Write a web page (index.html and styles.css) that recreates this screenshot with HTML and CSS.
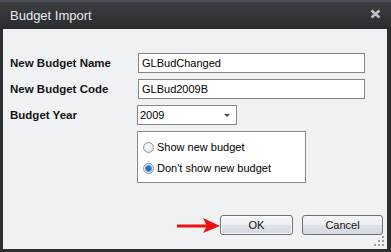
FILE: index.html
```html
<!DOCTYPE html>
<html lang="en">
<head>
    <meta charset="UTF-8">
    <title>Budget Import</title>
    <link rel="stylesheet" href="styles.css">
</head>
<body>
    <div class="window">
        <div class="titlebar">
            <span class="title">Budget Import</span>
            <svg class="close" width="11" height="10" viewBox="0 0 11 10">
                <path d="M1.5 1.5 L9.5 8.5 M9.5 1.5 L1.5 8.5" stroke="#b9c3cf" stroke-width="2.6" fill="none"/>
            </svg>
        </div>

        <div class="content">
            <div class="form">
                <label class="label">New Budget Name</label>
                <div class="field name-field">GLBudChanged</div>

                <label class="label">New Budget Code</label>
                <div class="field">GLBud2009B</div>

                <label class="label">Budget Year</label>
                <div class="select">
                    <span>2009</span>
                    <span class="caret"></span>
                </div>

                <div></div>
                <div class="options">
                    <div class="option">
                        <span class="radio"></span>
                        <span>Show new budget</span>
                    </div>
                    <div class="option">
                        <span class="radio checked"></span>
                        <span>Don't show new budget</span>
                    </div>
                </div>
            </div>

            <div class="buttons">
                <button class="btn ok">OK</button>
                <button class="btn cancel">Cancel</button>
            </div>

            <!-- annotation arrow pointing at OK -->
            <svg class="arrow" width="44" height="16" viewBox="0 0 44 16">
                <rect x="0" y="6.5" width="30" height="3" fill="#ee1010"/>
                <path d="M26 0 L43 8 L26 15 L30 8 Z" fill="#ee1010"/>
            </svg>

            <svg class="grip" width="11" height="11" viewBox="0 0 11 11">
                <rect x="8" y="0" width="2" height="2" fill="#9aa0a8"/>
                <rect x="4" y="4" width="2" height="2" fill="#9aa0a8"/>
                <rect x="8" y="4" width="2" height="2" fill="#9aa0a8"/>
                <rect x="0" y="8" width="2" height="2" fill="#9aa0a8"/>
                <rect x="4" y="8" width="2" height="2" fill="#9aa0a8"/>
                <rect x="8" y="8" width="2" height="2" fill="#9aa0a8"/>
            </svg>
        </div>
    </div>
</body>
</html>
```

FILE: styles.css
```css
body {
    margin: 0;
    font-family: "Liberation Sans", Arial, sans-serif;
    background: #2c2e32;
}
.window {
    width: 391px;
    height: 252px;
    box-sizing: border-box;
    display: flex;
    flex-direction: column;
    background: #2c2e32;
    padding: 0 4px 3px 3px;
}
.titlebar {
    height: 29px;
    margin: 0 -4px 0 -3px;
    padding: 0 10px 0 10px;
    display: flex;
    align-items: center;
    justify-content: space-between;
    border-top: 2px solid #4b505b;
    box-sizing: border-box;
    background: linear-gradient(#3c3e42, #2a2b2e);
}
.title {
    color: #e6ebf2;
    font-size: 13px;
    margin-top: -1px;
}
.close {
    margin-right: 0;
    margin-top: -3px;
}
.content {
    position: relative;
    flex: 1;
    display: flex;
    flex-direction: column;
    background: #f0f1f3;
    padding: 24px 4px 14px 7px;
}
.form {
    display: grid;
    grid-template-columns: 128px 227px;
    grid-template-rows: 20px 20px 20px auto;
    row-gap: 6px;
    align-items: center;
}
.label {
    font-weight: bold;
    font-size: 11.5px;
    color: #141414;
}
.field {
    height: 20px;
    box-sizing: border-box;
    border: 1px solid #858585;
    background: #fff;
    font-size: 11px;
    padding: 3px 0 0 3px;
    color: #000;
}
.name-field {
    margin-bottom: 1px;
}
.select {
    width: 100px;
    height: 20px;
    box-sizing: border-box;
    margin-left: -1px;
    border: 1px solid #858585;
    background: #fff;
    font-size: 11px;
    padding: 0 6px 0 2px;
    display: flex;
    align-items: center;
    justify-content: space-between;
}
.caret {
    width: 0;
    height: 0;
    border-left: 3px solid transparent;
    border-right: 3px solid transparent;
    border-top: 3px solid #444;
    margin-top: 1px;
}
.options {
    width: 169px;
    height: 52px;
    box-sizing: border-box;
    margin-left: -1px;
    border: 1px solid #8a8a8a;
    background: #fff;
    display: flex;
    flex-direction: column;
    justify-content: center;
    gap: 9px;
    padding: 1px 0 0 5px;
    font-size: 11px;
}
.option {
    display: flex;
    align-items: center;
    gap: 3px;
}
.radio {
    width: 11px;
    height: 11px;
    box-sizing: border-box;
    border-radius: 50%;
    border: 1px solid #8e959c;
    background: radial-gradient(circle at 40% 35%, #fbfbfb, #d9dde1);
}
.radio.checked {
    background: radial-gradient(circle, #2a6fb0 0 2px, #5f9fd6 3px, #dbe7f1 4px, #eef2f5 6px);
}
.buttons {
    margin-top: auto;
    display: flex;
    justify-content: flex-end;
    gap: 9px;
}
.btn {
    height: 20px;
    font-family: "Liberation Sans", Arial, sans-serif;
    font-size: 11px;
    color: #111;
    border: 1px solid #707070;
    border-radius: 3px;
    background: linear-gradient(#f4f5f7 0%, #eceef1 50%, #dde2e8 51%, #d3d9e0 100%);
    padding: 0;
}
.ok {
    width: 73px;
    box-shadow: inset 0 0 0 1px #f8fafc;
}
.cancel {
    width: 81px;
}
.arrow {
    position: absolute;
    left: 174px;
    top: 189px;
}
.grip {
    position: absolute;
    right: 2px;
    bottom: 2px;
}
```
